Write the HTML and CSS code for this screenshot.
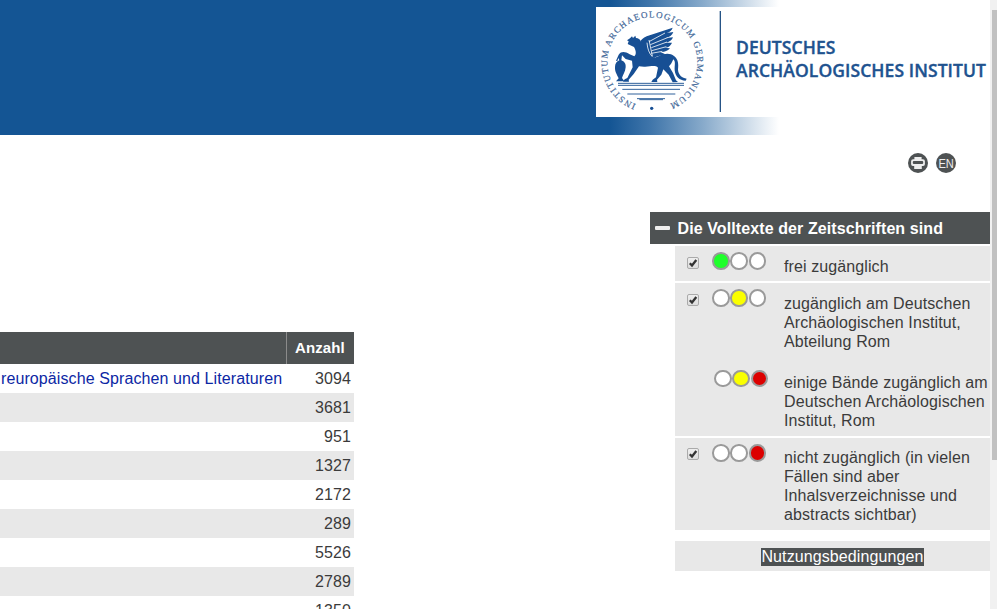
FILE: index.html
```html
<!DOCTYPE html>
<html lang="de">
<head>
<meta charset="utf-8">
<title>Elektronische Zeitschriftenbibliothek</title>
<link rel="stylesheet" href="styles.css">
</head>
<body>
<div class="page">
  <header class="banner">
    <div class="logo">
      <svg class="emblem" viewBox="18 21 390 330" width="130" height="110" aria-hidden="true">
        <defs><path id="ring" d="M138 313A135 135 0 1 1 236 313"/></defs>
        <text class="ring-text" textLength="744" lengthAdjust="spacing"><textPath href="#ring" textLength="744" lengthAdjust="spacing">INSTITUTUM ARCHAEOLOGICUM GERMANICUM</textPath></text>
        <g fill="#174f94">
          <circle cx="185" cy="325" r="5"/>
          <path d="M86 164C94 153 106 155 119 163L133 169C139 164 139 153 132 141L113 132L116 124L111 121L120 115L126 109L129 114L136 107L138 114C153 116 155 126 151 136C155 147 158 153 165 158L194 173L207 168C221 160 241 158 252 168C265 177 266 194 264 208C264 225 277 235 290 236L287 242C268 242 256 229 254 211C253 196 258 185 250 178C246 187 243 194 237 199L249 219L258 241L264 246L248 247L236 224L220 208L214 224L201 239L202 246H184L188 239L198 232L204 203C195 194 180 201 162 200L147 199L131 222L116 239L117 245H99L104 238L112 234L128 202L126 182L107 177L96 166L94 181C102 184 108 190 107 202C106 216 98 226 96 234L103 244H78L86 235C81 224 74 215 75 201C75 190 81 184 88 181L85 174L82 184L78 182Z"/>
          <path d="M154 155C142 134 149 118 170 109L248 83C246 91 239 96 230 99L250 96C247 105 240 111 228 114L249 112C246 121 239 126 226 128L246 128C241 139 234 143 221 143L240 145C232 154 222 157 211 156L226 163C215 169 203 166 194 174C181 168 169 164 160 159Z"/>
        </g>
        <path class="feathers" d="M177 125L225 99M181 134L235 112M184 143L231 126M185 152L229 140M184 160L217 154M177 120L187 168M171 128Q173 156 187 170"/>
        <path class="lines" d="M84 250H282M84 256H282M97 268H270M112 282H256M141 296H225M148 299H219"/>
        <path class="divider" d="M391 33V336"/>
      </svg>
      <div class="logo-name">
        <div class="name-one">DEUTSCHES</div>
        <div class="name-two">ARCHÄOLOGISCHES INSTITUT</div>
      </div>
    </div>
  </header>
  <div class="tools">
    <svg width="20" height="20" viewBox="0 0 20 20"><circle cx="10" cy="10" r="10" fill="#4e5253"/><path fill="#eee" d="M6.4 4h7.2v2.3h1.3q2 0 2 2v3q0 1.8-1.8 1.8h-1.3V16H6.2v-2.9H4.9q-1.8 0-1.8-1.8v-3q0-2 2-2h1.3z"/><rect x="4.8" y="8" width="10.4" height="3" rx="1" fill="#4e5253"/></svg>
    <svg width="20" height="20" viewBox="0 0 20 20"><circle cx="10" cy="10" r="10" fill="#4e5253"/><text class="lang" x="2.4" y="14.5" textLength="15.4" lengthAdjust="spacingAndGlyphs">EN</text></svg>
  </div>
  <div class="columns">
    <main class="subjects">
      <div class="row head"><span></span><b>Anzahl</b></div>
      <div class="row"><a>reuropäische Sprachen und Literaturen</a><span>3094</span></div>
      <div class="row"><a></a><span>3681</span></div>
      <div class="row"><a></a><span>951</span></div>
      <div class="row"><a></a><span>1327</span></div>
      <div class="row"><a></a><span>2172</span></div>
      <div class="row"><a></a><span>289</span></div>
      <div class="row"><a></a><span>5526</span></div>
      <div class="row"><a></a><span>2789</span></div>
      <div class="row"><a></a><span>1350</span></div>
    </main>
    <aside class="filters">
      <h2><i class="minus"></i>Die Volltexte der Zeitschriften sind</h2>
      <div class="group first">
        <div class="option"><span class="check"><svg width="12" height="12" viewBox="0 0 12 12"><path d="M2.8 6.2L5 8.5 9.3 3"/></svg></span><span class="lights"><i class="green"></i><i></i><i></i></span><p>frei zugänglich</p></div>
      </div>
      <div class="group second">
        <div class="option"><span class="check"><svg width="12" height="12" viewBox="0 0 12 12"><path d="M2.8 6.2L5 8.5 9.3 3"/></svg></span><span class="lights"><i></i><i class="yellow"></i><i></i></span><p>zugänglich am Deutschen<br>Archäologischen Institut,<br>Abteilung Rom</p></div>
        <div class="option partial"><span class="lights"><i></i><i class="yellow"></i><i class="red"></i></span><p>einige Bände zugänglich am<br>Deutschen Archäologischen<br>Institut, Rom</p></div>
      </div>
      <div class="group third">
        <div class="option"><span class="check"><svg width="12" height="12" viewBox="0 0 12 12"><path d="M2.8 6.2L5 8.5 9.3 3"/></svg></span><span class="lights"><i></i><i></i><i class="red"></i></span><p>nicht zugänglich (in vielen<br>Fällen sind aber<br>Inhalsverzeichnisse und<br>abstracts sichtbar)</p></div>
      </div>
      <div class="terms"><a>Nutzungsbedingungen</a></div>
    </aside>
  </div>
</div>
<div class="scrollbar"><div class="thumb"></div></div>
</body>
</html>
```
FILE: styles.css
```css
* { box-sizing: border-box; }
body {
  margin: 0;
  height: 609px;
  display: flex;
  overflow: hidden;
  background: #fff;
  color: #3b3b3b;
  font: 16px/19px "Liberation Sans", Arial, sans-serif;
  letter-spacing: .1px;
}
.page { width: 990px; flex: none; }
.banner {
  height: 135px;
  padding: 7px 0 0 596px;
  background: linear-gradient(to right, #145594 610px, #3f75aa 650px, #86a9ca 702px, #fff 779px);
}
.logo { display: flex; height: 110px; background: #fff; }
.emblem { flex: none; }
.ring-text { font: 27px "Liberation Serif", serif; fill: #3f6798; stroke: #3f6798; stroke-width: .5; }
.feathers { stroke: #fff; stroke-width: 2.4; fill: none; }
.lines { stroke: #2e609b; stroke-width: 3; }
.divider { stroke: #265486; stroke-width: 4; }
.logo-name {
  padding: 29px 0 0 10px;
  color: #20528f;
  font: 600 17.5px/23px "Open Sans", sans-serif;
  letter-spacing: .08px;
  white-space: nowrap;
  -webkit-text-stroke: .35px #20528f;
}
.tools { height: 77px; padding: 18px 0 0 908px; display: flex; gap: 8px; }
.lang { font: 12.5px "Liberation Sans", sans-serif; letter-spacing: 0; fill: #eee; }
.columns { display: flex; justify-content: space-between; align-items: flex-start; }
.subjects { width: 354px; margin-top: 120px; }
.row { height: 29px; display: flex; justify-content: space-between; align-items: center; padding: 0 3px 0 1px; }
.row:nth-child(odd) { background: #e8e8e8; }
.row a { color: #0c27a4; white-space: nowrap; }
.row.head { height: 32px; background: #4e5253; color: #fff; padding: 0; }
.head b { width: 68px; line-height: 32px; padding-left: 8px; border-left: 1px solid #8b8b8b; font-size: 15px; }
.filters { width: 340px; flex: none; }
h2 {
  height: 32px;
  margin: 0 0 2px;
  padding-left: 5px;
  display: flex;
  align-items: center;
  background: #4e5253;
  color: #fff;
  font-size: 16px;
}
.minus { width: 15px; height: 4px; border-radius: 1px; margin-right: 7.5px; background: #eee; }
.group { margin: 0 0 2px 25px; background: #e8e8e8; }
.first { height: 35px; }
.second { height: 153px; }
.third { height: 92px; }
.option { display: grid; grid-template-columns: 37px 72px 1fr; padding-top: 6px; align-items: start; }
.option p { margin: 5px 0 0; white-space: nowrap; }
.third p { margin-top: 4px; }
.check {
  width: 12px;
  height: 12px;
  margin: 5px 0 0 12px;
  border: 1px solid #aaa;
  border-radius: 2px;
  background: linear-gradient(#eee, #ddd);
  display: flex;
  align-items: center;
  justify-content: center;
}
.third .check { margin-top: 4px; }
.check svg { flex: none; }
.check path { fill: none; stroke: #333; stroke-width: 2.3; }
.lights { display: flex; gap: .8px; }
.lights i { width: 17.5px; height: 17.5px; border: 2px solid #9a9a9a; border-radius: 50%; background: #fff; }
.lights .green { background: #1fff2b; }
.lights .yellow { background: #faff00; }
.lights .red { background: #dc0000; }
.partial { padding: 18px 0 0 39px; grid-template-columns: 70px 1fr; }
.partial .lights { margin-top: .5px; }
.partial p { margin-top: 4px; }
.terms { height: 30px; margin: 11px 0 0 25px; padding: 6px 0 0 20px; background: #e8e8e8; text-align: center; }
.terms a { display: inline-block; height: 18px; line-height: 18px; background: #4e5253; color: #fff; }
.scrollbar { width: 7px; padding: 10px 0 0 2px; background: #f1f1f1; }
.thumb { height: 450px; background: #c1c1c1; }
```
